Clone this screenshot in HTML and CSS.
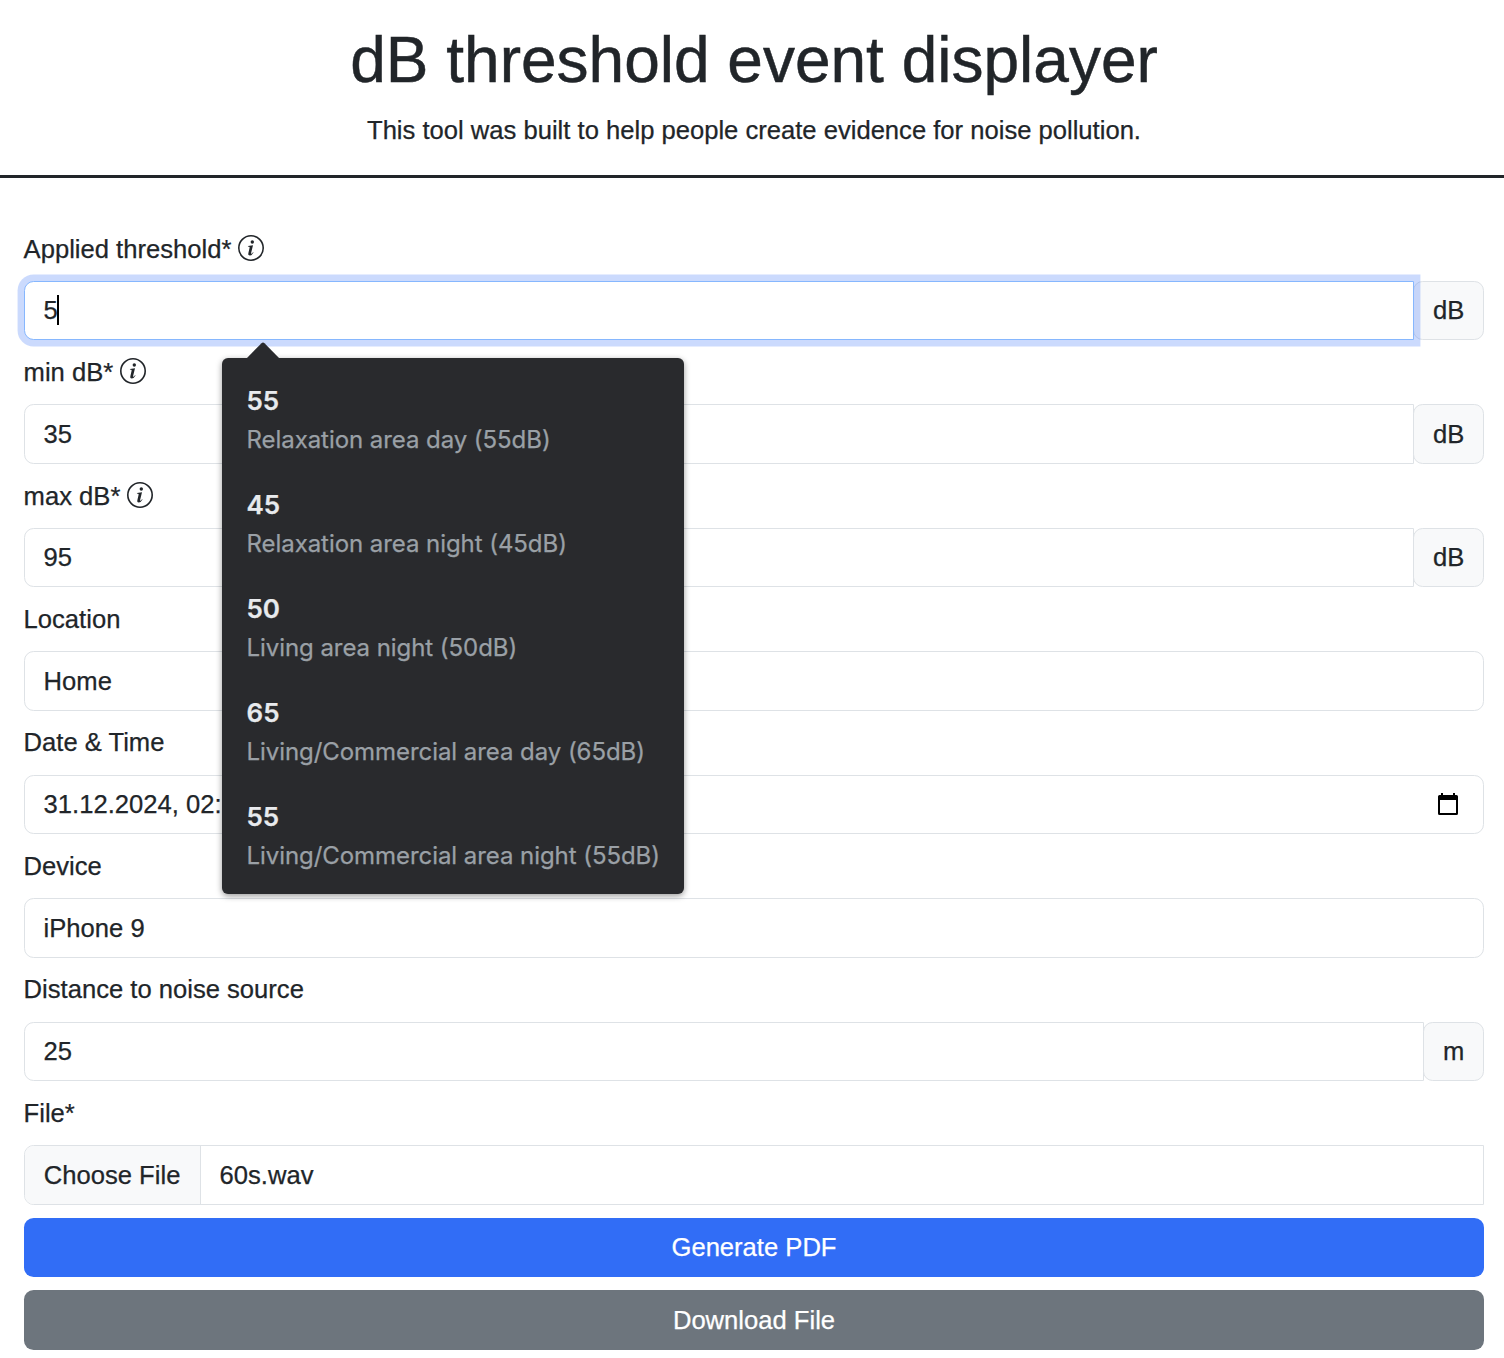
FILE: index.html
```html
<!DOCTYPE html>
<html lang="en">
<head>
<meta charset="utf-8">
<title>dB threshold event displayer</title>
<link rel="stylesheet" href="styles.css">
</head>
<body>
<svg class="symbols" aria-hidden="true">
  <symbol id="info" viewBox="0 0 26 26">
    <circle cx="13" cy="13" r="12.200" fill="none" stroke="currentColor" stroke-width="1.600"/>
    <circle cx="14.300" cy="7" r="1.700"/>
    <path d="M10 10.900 15 10.200 13.100 17.900Q12.900 18.900 13.500 18.700 14.200 18.300 15 17.200l.6.400Q13.900 20.500 11.800 20.500 9.800 20.500 10.400 18L11.600 12.800Q11.800 11.800 11.100 11.700L9.900 11.600z"/>
  </symbol>
</svg>
<header class="header">
  <h1 class="title">dB threshold event displayer</h1>
  <p class="lead">This tool was built to help people create evidence for noise pollution.</p>
</header>
<main class="form">
  <div class="field">
    <div class="label"><span>Applied threshold*</span><svg class="info"><use href="#info"/></svg></div>
    <div class="group">
      <div class="input joined focused" role="textbox">5<i class="caret"></i></div>
      <div class="unit">dB</div>
      <div class="suggestions" role="listbox">
        <svg class="arrow" viewBox="0 0 34 17"><path d="M0 17 15.500 1.200Q17-.300 18.500 1.200L34 17z"/></svg>
        <div class="option" role="option"><b class="value">55</b><span class="hint">Relaxation area day (55dB)</span></div>
        <div class="option" role="option"><b class="value">45</b><span class="hint">Relaxation area night (45dB)</span></div>
        <div class="option" role="option"><b class="value">50</b><span class="hint">Living area night (50dB)</span></div>
        <div class="option" role="option"><b class="value">65</b><span class="hint">Living/Commercial area day (65dB)</span></div>
        <div class="option" role="option"><b class="value">55</b><span class="hint">Living/Commercial area night (55dB)</span></div>
      </div>
    </div>
  </div>
  <div class="field">
    <div class="label"><span>min dB*</span><svg class="info"><use href="#info"/></svg></div>
    <div class="group"><div class="input joined" role="textbox">35</div><div class="unit">dB</div></div>
  </div>
  <div class="field">
    <div class="label"><span>max dB*</span><svg class="info"><use href="#info"/></svg></div>
    <div class="group"><div class="input joined" role="textbox">95</div><div class="unit">dB</div></div>
  </div>
  <div class="field">
    <div class="label">Location</div>
    <div class="group"><div class="input" role="textbox">Home</div></div>
  </div>
  <div class="field">
    <div class="label">Date &amp; Time</div>
    <div class="group"><div class="input date" role="textbox"><span>31.12.2024, 02:</span>
      <svg class="calendar" viewBox="0 0 20 22"><path fill-rule="evenodd" d="M3 0h2v2h10V0h2v2h1.500Q20 2 20 3.500v17q0 1.500-1.500 1.500h-17Q0 22 0 20.500v-17Q0 2 1.500 2H3zM2 7v13h16V7z"/></svg>
    </div></div>
  </div>
  <div class="field">
    <div class="label">Device</div>
    <div class="group"><div class="input" role="textbox">iPhone 9</div></div>
  </div>
  <div class="field">
    <div class="label">Distance to noise source</div>
    <div class="group"><div class="input joined" role="textbox">25</div><div class="unit">m</div></div>
  </div>
  <div class="field">
    <div class="label">File*</div>
    <div class="group"><div class="input file"><span class="choose">Choose File</span><span class="filename">60s.wav</span></div></div>
  </div>
  <button class="button primary" type="button">Generate PDF</button>
  <button class="button secondary" type="button">Download File</button>
</main>
</body>
</html>
```
FILE: styles.css
```css
* { box-sizing: border-box; }

body {
  margin: 0;
  background: #fff;
  color: #212529;
  font: 25.6px/1.5 "Liberation Sans", Arial, sans-serif;
  -webkit-text-stroke: .25px;
  overflow: hidden;
}

.symbols { display: none; }

.header {
  height: 178px;
  padding: 22px 0 0 4px;
  border-bottom: 3px solid #212529;
  text-align: center;
}

.title {
  margin: 0 0 12px;
  font-size: 64px;
  font-weight: 500;
  line-height: 76.8px;
  -webkit-text-stroke: .5px;
}

.title, .lead { white-space: nowrap; }

.lead { margin: 0; }

.form {
  display: flex;
  flex-direction: column;
  gap: 12.8px;
  padding: 51.7px 20px 0 24px;
}

.field {
  display: flex;
  flex-direction: column;
  gap: 13.1px;
}

.label {
  display: flex;
  align-items: center;
  gap: 7px;
  height: 38.1px;
  margin-left: -.4px;
}

.info {
  width: 26px;
  height: 26px;
  margin-bottom: 1.6px;
  fill: currentColor;
}

.group {
  position: relative;
  display: flex;
  height: 59.5px;
}

.input {
  flex: 1;
  display: flex;
  align-items: center;
  padding: 0 18.600px;
  border: 1px solid #dee2e6;
  border-radius: 9.6px;
  background: #fff;
}

.joined { border-radius: 9.6px 0 0 9.6px; }

.focused {
  z-index: 1;
  border-color: #86b7fe;
  box-shadow: 0 0 0 6.4px rgba(49, 109, 246, .25);
}

.caret { width: 2px; height: 30px; margin: 0 0 1px -.5px; background: #000; }

.unit {
  display: flex;
  align-items: center;
  margin-left: -1px;
  padding: 0 18.700px;
  border: 1px solid #dee2e6;
  border-radius: 9.6px;
  background: #f8f9fa;
}

.date { justify-content: space-between; padding-right: 25px; }

.calendar { width: 20px; height: 22px; margin-bottom: 1.4px; }

.file {
  align-items: stretch;
  padding: 0;
  border-radius: 9.6px 0 0 9.6px;
  overflow: hidden;
}

.choose, .filename {
  display: flex;
  align-items: center;
  padding: 0 19.4px 0 18.8px;
}

.choose { background: #f8f9fa; border-right: 1px solid #dee2e6; }

.button {
  height: 59.5px;
  padding: 0 0 1px;
  border: 0;
  border-radius: 9.6px;
  color: #fff;
  font: inherit;
}

.primary { background: #316df6; }

.secondary { height: 60px; padding: 0; background: #6d757d; }

.suggestions {
  position: absolute;
  z-index: 2;
  top: 77.100px;
  left: 198px;
  width: 462px;
  height: 536px;
  padding: 10.500px 0 5.500px;
  border-radius: 6px;
  background: #292a2d;
  box-shadow: 0 2px 6px rgba(0, 0, 0, .4);
  font-family: Inter, sans-serif;
}

.arrow {
  position: absolute;
  top: -16.200px;
  left: 24px;
  width: 34px;
  height: 17px;
  fill: #292a2d;
}

.option {
  display: flex;
  flex-direction: column;
  justify-content: center;
  height: 104px;
  padding-left: 24.500px;
  white-space: nowrap;
}

.value {
  color: #e8eaed;
  font-size: 26px;
  font-weight: 600;
  line-height: 39px;
}

.hint {
  color: #9aa0a6;
  font-size: 24px;
  line-height: 39px;
  letter-spacing: -.06px;
}
```
